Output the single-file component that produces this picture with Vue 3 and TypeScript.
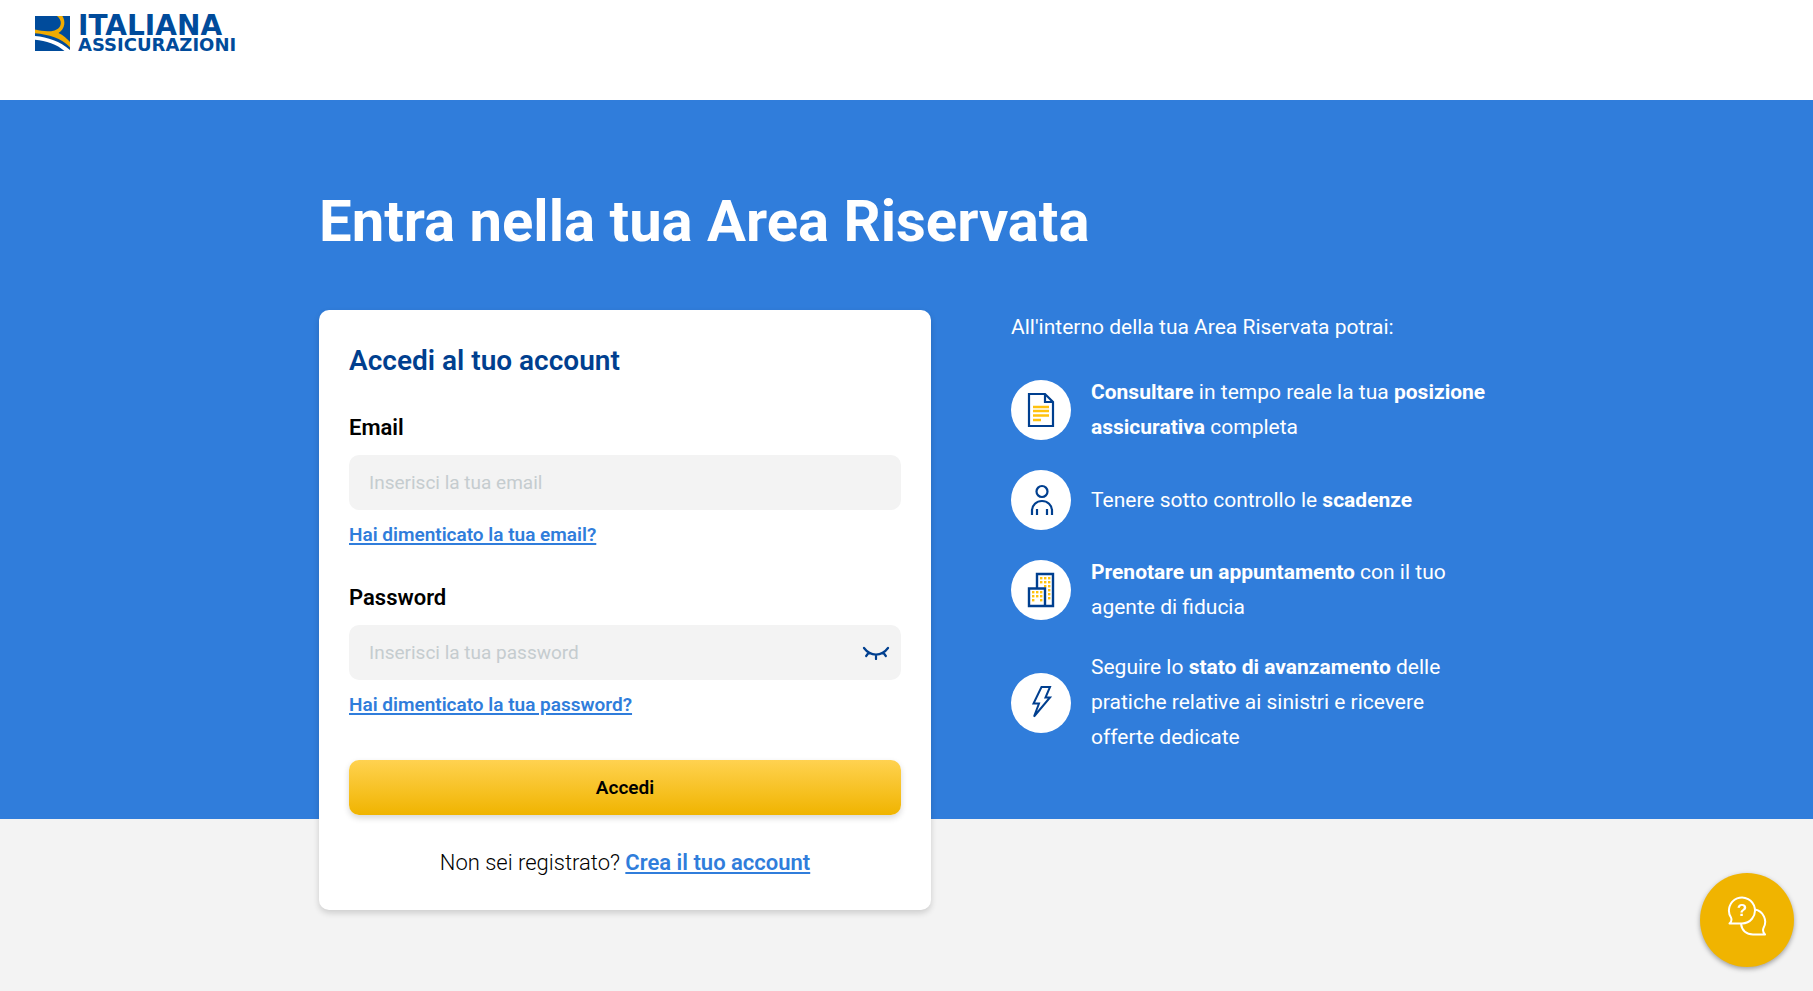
<script setup lang="ts">
import { ref } from 'vue'

type IconName = 'document' | 'person' | 'building' | 'bolt'
interface Chunk {
  text: string
  strong?: boolean
}
interface Benefit {
  icon: IconName
  chunks: Chunk[]
}

const email = ref('')
const password = ref('')
const showPassword = ref(false)

const benefits: Benefit[] = [
  {
    icon: 'document',
    chunks: [
      { text: 'Consultare', strong: true },
      { text: ' in tempo reale la tua ' },
      { text: 'posizione assicurativa', strong: true },
      { text: ' completa' },
    ],
  },
  {
    icon: 'person',
    chunks: [{ text: 'Tenere sotto controllo le ' }, { text: 'scadenze', strong: true }],
  },
  {
    icon: 'building',
    chunks: [
      { text: 'Prenotare un appuntamento', strong: true },
      { text: ' con il tuo agente di fiducia' },
    ],
  },
  {
    icon: 'bolt',
    chunks: [
      { text: 'Seguire lo ' },
      { text: 'stato di avanzamento', strong: true },
      { text: ' delle pratiche relative ai sinistri e ricevere offerte dedicate' },
    ],
  },
]

const windows: [number, number][] = [
  [13, 5], [17, 5], [21, 5],
  [13, 9], [17, 9], [21, 9],
  [17, 13], [21, 13],
  [21, 17], [21, 21], [21, 25],
  [5, 19], [9, 19], [13, 19],
  [5, 23], [9, 23], [13, 23],
  [5, 27], [13, 27],
]
</script>

<template>
  <div class="page">
    <header class="header">
      <a class="brand" href="#" aria-label="Italiana Assicurazioni">
        <svg class="brand-mark" viewBox="0 0 35 35" aria-hidden="true">
          <rect width="35" height="35" fill="#004b9b" />
          <path
            d="M0 13.6C7 15.2 14 16 19.500 14.400C25.500 12.500 28 6.500 23.600 1.400L22 0H27.400C30.600 5 30.400 12.500 23.500 17C28 19 32 22.500 35 26V31.200C26 22 14 18.400 0 17.200Z"
            fill="#f0ab00"
          />
          <path d="M0 20C13 21 25 25.500 35 34V35H29.500C22 28.500 11 24.500 0 23.800Z" fill="#fff" />
        </svg>
        <span class="brand-name">
          <span class="brand-top">ITALIANA</span>
          <span class="brand-bottom">ASSICURAZIONI</span>
        </span>
      </a>
    </header>

    <main class="hero">
      <div class="container">
        <h1>Entra nella tua Area Riservata</h1>
        <div class="columns">
          <form class="card" @submit.prevent>
            <h2>Accedi al tuo account</h2>

            <label for="email">Email</label>
            <div class="field">
              <input id="email" v-model="email" type="email" placeholder="Inserisci la tua email" />
            </div>
            <a class="link forgot" href="#">Hai dimenticato la tua email?</a>

            <label for="password">Password</label>
            <div class="field">
              <input
                id="password"
                v-model="password"
                :type="showPassword ? 'text' : 'password'"
                placeholder="Inserisci la tua password"
              />
              <button
                class="toggle"
                type="button"
                aria-label="Mostra password"
                @click="showPassword = !showPassword"
              >
                <svg viewBox="0 0 28 14" aria-hidden="true">
                  <path
                    d="M2 2C8.500 10.700 19.500 10.700 26 2M14 8.500V13M6.800 6.500L4.200 10M21.200 6.500L23.800 10"
                    fill="none"
                    stroke="#003f8f"
                    stroke-width="2.200"
                    stroke-linecap="round"
                  />
                </svg>
              </button>
            </div>
            <a class="link forgot" href="#">Hai dimenticato la tua password?</a>

            <button class="submit" type="submit">Accedi</button>
            <p class="register">
              Non sei registrato? <a class="link" href="#">Crea il tuo account</a>
            </p>
          </form>

          <section class="info">
            <p class="intro">All'interno della tua Area Riservata potrai:</p>
            <ul>
              <li v-for="item in benefits" :key="item.icon">
                <span class="badge">
                  <svg v-if="item.icon === 'document'" class="icon" viewBox="0 0 36 36" aria-hidden="true">
                    <path d="M6 2H22L30 10V34H6ZM22 2V10H30" fill="none" stroke="#003f8f" stroke-width="2.200" />
                    <path d="M10 15H26M10 19H26M10 23.500H26M10 28H18" fill="none" stroke="#ffc20e" stroke-width="2.400" />
                  </svg>
                  <svg v-else-if="item.icon === 'person'" class="icon" viewBox="0 0 36 36" aria-hidden="true">
                    <g fill="none" stroke="#003f8f" stroke-width="2.200">
                      <circle cx="19" cy="9.500" r="5.500" />
                      <path d="M9 33V28.500A10 9.500 0 0 1 29 28.500V33M14 33V27M24 33V27" />
                    </g>
                  </svg>
                  <svg v-else-if="item.icon === 'building'" class="icon" viewBox="0 0 36 36" aria-hidden="true">
                    <g transform="translate(4 0)">
                      <rect v-for="([x, y], i) in windows" :key="i" :x="x" :y="y" width="2.400" height="2.400" fill="#ffc20e" />
                      <path d="M10 16V2H26V34H18M2 16.500H18V34H2Z" fill="none" stroke="#003f8f" stroke-width="2.400" />
                    </g>
                  </svg>
                  <svg v-else class="icon" viewBox="0 0 36 36" aria-hidden="true">
                    <path
                      d="M18.500 2H27L22.500 12.500H27L11 31.500L16 18.500H10.500Z"
                      fill="none"
                      stroke="#003f8f"
                      stroke-width="2"
                    />
                  </svg>
                </span>
                <p>
                  <template v-for="(chunk, i) in item.chunks" :key="i">
                    <strong v-if="chunk.strong">{{ chunk.text }}</strong>
                    <template v-else>{{ chunk.text }}</template>
                  </template>
                </p>
              </li>
            </ul>
          </section>
        </div>
      </div>
    </main>

    <button class="chat" type="button" aria-label="Assistenza">
      <svg viewBox="0 0 40 40" aria-hidden="true">
        <g fill="none" stroke="#fff" stroke-width="2" stroke-linejoin="round">
          <path d="M3 27C5 25 5 24 4 21.500A13 13 0 1 1 15 27.500H2.500Z" />
          <path d="M28 13.500A12.500 12.500 0 0 1 36.500 32C35.500 34.500 36 36.500 38 38.500H26C19.500 38.500 15 34.500 14 28" />
        </g>
        <text x="15" y="20" text-anchor="middle">?</text>
      </svg>
    </button>
  </div>
</template>

<style>
body {
  margin: 0;
  background: #f3f3f3;
}
</style>

<style scoped>
.page {
  min-height: 100vh;
  background: #f3f3f3;
  font-family: Roboto, 'Open Sans', sans-serif;
  color: #000;
}
h1,
h2,
p,
ul {
  margin: 0;
  padding: 0;
}
.header {
  box-sizing: border-box;
  height: 100px;
  padding: 16px 35px;
  background: #fff;
}
.brand {
  display: inline-flex;
  gap: 8px;
  text-decoration: none;
}
.brand-mark {
  width: 35px;
  height: 35px;
}
.brand-name {
  display: flex;
  flex-direction: column;
  color: #004b9b;
  font-family: 'DejaVu Sans', sans-serif;
  font-weight: 700;
}
.brand-top {
  font-size: 28px;
  line-height: 20px;
}
.brand-bottom {
  font-size: 18px;
  line-height: 18px;
}
.hero {
  padding-top: 80px;
  background: linear-gradient(#307ddb, #307ddb) no-repeat;
  background-size: 100% calc(100% - 91px);
}
.container {
  box-sizing: border-box;
  max-width: 1175px;
  margin: 0 auto;
}
h1 {
  margin-bottom: 48px;
  color: #fff;
  font-size: 58px;
  font-weight: 700;
  line-height: 82px;
}
.columns {
  display: grid;
  grid-template-columns: 612fr 483fr;
  gap: 80px;
  align-items: start;
}
.card {
  display: flex;
  flex-direction: column;
  padding: 30px;
  border-radius: 10px;
  background: #fff;
  box-shadow: 0 3px 6px rgba(0, 0, 0, 0.16);
}
h2 {
  margin-bottom: 30px;
  color: #003f8f;
  font-size: 28px;
  font-weight: 600;
  line-height: 42px;
}
label {
  margin-bottom: 12px;
  font-size: 22px;
  font-weight: 600;
  line-height: 31px;
}
.field {
  position: relative;
  display: flex;
}
input {
  box-sizing: border-box;
  width: 100%;
  height: 55px;
  padding: 0 20px;
  border: 0;
  border-radius: 10px;
  background: #f3f3f3;
  font-family: inherit;
  font-size: 19px;
}
input::placeholder {
  color: #c5cccf;
  opacity: 1;
}
.toggle {
  position: absolute;
  top: 0;
  right: 11px;
  display: flex;
  align-items: center;
  height: 100%;
  padding: 0;
  border: 0;
  background: none;
  cursor: pointer;
}
.toggle svg {
  width: 28px;
  height: 14px;
}
.link {
  color: #307ddb;
  font-weight: 600;
  text-decoration: underline;
  text-decoration-thickness: 2px;
  text-underline-offset: 2px;
}
.forgot {
  align-self: flex-start;
  margin: 10px 0 32px;
  font-size: 19px;
  line-height: 30px;
}
.submit {
  height: 55px;
  margin: 8px 0 30px;
  border: 0;
  border-radius: 10px;
  background: linear-gradient(#ffd250, #f0b400);
  box-shadow: 0 3px 6px rgba(0, 0, 0, 0.16);
  color: #000;
  font-family: inherit;
  font-size: 19px;
  font-weight: 600;
  cursor: pointer;
}
.register {
  font-size: 22px;
  font-weight: 300;
  line-height: 35px;
  text-align: center;
}
.info {
  color: #fff;
  font-size: 21px;
  line-height: 35px;
}
.intro {
  margin-bottom: 30px;
}
ul {
  display: flex;
  flex-direction: column;
  gap: 25px;
  padding-right: 5px;
  list-style: none;
}
li {
  display: flex;
  align-items: center;
  gap: 20px;
}
.badge {
  display: flex;
  flex: none;
  align-items: center;
  justify-content: center;
  width: 60px;
  height: 60px;
  border-radius: 50%;
  background: #fff;
}
.icon {
  width: 36px;
  height: 36px;
}
.chat {
  position: fixed;
  right: 19px;
  bottom: 24px;
  display: flex;
  align-items: center;
  justify-content: center;
  width: 94px;
  height: 94px;
  padding: 0 0 8px;
  border: 0;
  border-radius: 50%;
  background: #f0b400;
  box-shadow: 0 2px 5px rgba(0, 0, 0, 0.35);
  cursor: pointer;
}
.chat svg {
  width: 40px;
  height: 40px;
}
.chat text {
  fill: #fff;
  font-size: 17px;
  font-weight: 900;
}
</style>
